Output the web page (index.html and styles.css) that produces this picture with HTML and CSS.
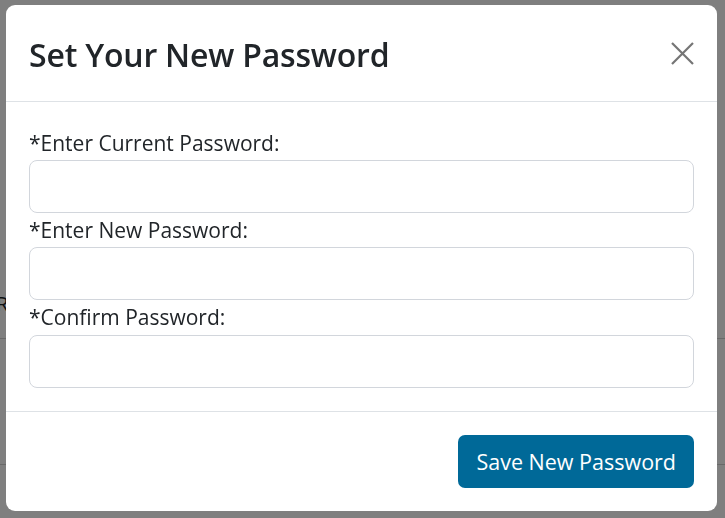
FILE: index.html
```html
<!DOCTYPE html>
<html lang="en">
<head>
<meta charset="utf-8">
<title>Set Your New Password</title>
<link rel="stylesheet" href="styles.css">
</head>
<body>
<div class="page">
  <div class="page-row page-row-a"><span class="page-text">R</span></div>
  <div class="page-row page-row-b"></div>
  <div class="page-row page-row-c"></div>
</div>
<div class="backdrop">
  <div class="modal" role="dialog" aria-labelledby="modal-title">
    <div class="modal-header">
      <h2 class="modal-title" id="modal-title">Set Your New Password</h2>
      <button class="btn-close" type="button" aria-label="Close">
        <svg width="23" height="23" viewBox="0 0 23 23"><path d="M1 1L22 22M22 1L1 22" stroke="currentColor" stroke-width="2.2" fill="none"/></svg>
      </button>
    </div>
    <div class="modal-body">
      <label class="field-label" for="cur">*Enter Current Password:</label>
      <input class="field-input" id="cur" type="password">
      <label class="field-label" for="new">*Enter New Password:</label>
      <input class="field-input" id="new" type="password">
      <label class="field-label field-label-last" for="conf">*Confirm Password:</label>
      <input class="field-input" id="conf" type="password">
    </div>
    <div class="modal-footer">
      <button class="btn-save" type="button">Save New Password</button>
    </div>
  </div>
</div>
</body>
</html>
```

FILE: styles.css
```css
* { box-sizing: border-box; }
html, body { margin: 0; height: 100%; }
body {
  font-family: "Open Sans", "Noto Sans", sans-serif;
  color: #212529;
  background: #ffffff;
  overflow: hidden;
}
.page {
  display: flex;
  flex-direction: column;
  padding-top: 282px;
}
.page-row {
  border-bottom: 1px solid #d2d2d2;
}
.page-row-a {
  height: 57px;
  padding-top: 8px;
  font-size: 20px;
}
.page-text { margin-left: -4px; }
.page-row-b { height: 126px; }
.page-row-c { height: 0; border: none; }

.backdrop {
  position: fixed;
  inset: 0;
  background: rgba(0, 0, 0, 0.5);
  padding: 5px 8px 7px 6px;
  display: flex;
}
.modal {
  flex: 1;
  background: #fff;
  border-radius: 9px;
  display: flex;
  flex-direction: column;
  overflow: hidden;
}
.modal-header {
  height: 97px;
  border-bottom: 1px solid #dee2e6;
  display: flex;
  align-items: center;
  justify-content: space-between;
  padding: 2px 23px 0 23px;
}
.modal-title {
  margin: 0;
  font-size: 32px;
  font-weight: 600;
  color: #212529;
  letter-spacing: -0.2px;
}
.btn-close {
  border: 0;
  background: transparent;
  padding: 0;
  width: 23px;
  height: 23px;
  margin-top: -2px;
  color: #757575;
  display: flex;
}
.modal-body {
  padding: 24px 23px 23px;
  display: flex;
  flex-direction: column;
}
.field-label {
  display: block;
  font-size: 21px;
  line-height: 34px;
  color: #212529;
}
.field-label-last {
  line-height: 35px;
}
.field-input {
  display: block;
  width: 100%;
  height: 53px;
  border: 1px solid #d2d6dc;
  border-radius: 8px;
  background: #fff;
  font: inherit;
}
.modal-footer {
  border-top: 1px solid #dee2e6;
  padding: 23px;
  display: flex;
  justify-content: flex-end;
}
.btn-save {
  height: 53px;
  padding: 0 18px;
  border: 0;
  border-radius: 7px;
  background: #006998;
  color: #fff;
  font-family: inherit;
  font-size: 21.5px;
}
```
